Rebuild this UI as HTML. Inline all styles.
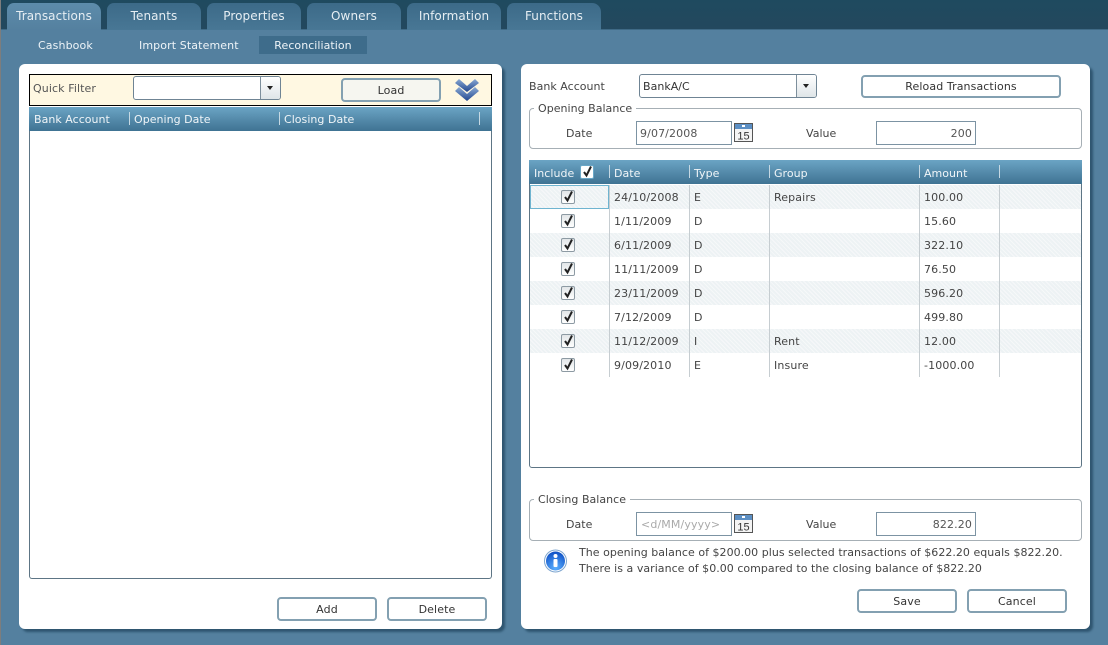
<!DOCTYPE html>
<html><head><meta charset="utf-8"><style>
html,body{margin:0;padding:0}
body{width:1108px;height:645px;overflow:hidden;position:relative;background:#54809f;font:11px "DejaVu Sans",sans-serif;color:#444;letter-spacing:.03px}
div,span{position:absolute;box-sizing:border-box;white-space:nowrap}
.top{left:0;top:0;width:1108px;height:30px;background:linear-gradient(#1f4a5f,#23485e);border-bottom:1px solid #3f6a86}
.tab{top:3px;width:94px;height:27px;border-radius:7px 9px 0 0;background:linear-gradient(#3c6a88,#487795);color:#e6eef3;text-align:center;line-height:26px;font-size:12px;letter-spacing:.08px}
.tab.a{background:linear-gradient(#5d8cab,#54809f);height:28px}
.sub{top:36px;height:18px;line-height:19px;text-align:center;color:#eef4f8;letter-spacing:.11px}
.panel{top:64px;height:565px;background:#fff;border-radius:6px;box-shadow:3px 3px 2px #2f5570}
.t{line-height:14px;margin-top:1px}
.btn{border:2px solid #83a0b1;border-radius:4px;background:#fff;text-align:center;color:#333;height:24px;line-height:21px;width:100px;letter-spacing:.12px}
.combo{background:#fff;border:1px solid #6f8494;border-radius:3px;color:#333;line-height:23px;padding-left:3px}
.arr{right:0;top:0;bottom:0;width:20px;border-left:1px solid #7d8f9c;background:linear-gradient(#fff,#dfe5e8);border-radius:0 2px 2px 0}
.arr:after{content:"";position:absolute;left:6px;top:9px;border:3.5px solid transparent;border-top:4px solid #222;border-bottom:0}
.hdr{background:linear-gradient(#6ba4c4,#3f7393);color:#f0f5f8;line-height:25px;height:24px}
.sep{width:1px;background:#c5d8e3;top:5px;height:13px}
.group{left:529px;width:553px;border:1px solid #a6afb5;border-radius:4px}
.leg{left:534px;background:#fff;padding:0 4px;color:#444;line-height:14px;margin-top:1px}
.inp{width:100px;height:24px;background:#fff;border:1px solid #7c93a3;line-height:23px;padding:0 3px;color:#555;letter-spacing:.12px}
.row{left:530px;width:551px;height:24px;line-height:24px}
.alt{background-color:#edf2f4;background-image:repeating-linear-gradient(45deg,#f6f8f9 0 1px,transparent 1px 3px)}
.vl{width:1px;background:#c6cdd1;top:185px;height:192px}
.cb{width:14px;height:14px;border:1px solid #8d9aa3;border-radius:2px;background:linear-gradient(#e2e6e8,#fff)}
.cb svg{position:absolute;left:0;top:-1px}
.cell{top:0;line-height:25px;letter-spacing:.13px}
</style></head><body>
<div style="left:0;top:0;width:1px;height:645px;background:#7d7d7d;z-index:5"></div>
<div class="top"></div>
<div class="tab a" style="left:7px">Transactions</div>
<div class="tab" style="left:107px">Tenants</div>
<div class="tab" style="left:207px">Properties</div>
<div class="tab" style="left:307px">Owners</div>
<div class="tab" style="left:407px">Information</div>
<div class="tab" style="left:507px">Functions</div>
<div class="sub" style="left:38px">Cashbook</div>
<div class="sub" style="left:139px">Import Statement</div>
<div class="sub" style="left:259px;width:108px;background:#3e6c8b;letter-spacing:.05px">Reconciliation</div>

<div class="panel" style="left:19px;width:483px"></div>
<div style="left:29px;top:74px;width:463px;height:32px;background:#fff8e2;border:1px solid #000"></div>
<div class="t" style="left:33px;top:81px;color:#555;letter-spacing:.1px">Quick Filter</div>
<div class="combo" style="left:133px;top:76px;width:148px;height:24px"><div class="arr"></div></div>
<div class="btn" style="left:341px;top:78px;background:#f6f6f0">Load</div>
<svg style="position:absolute;left:454px;top:78px" width="26" height="24" viewBox="0 0 26 24"><defs><linearGradient id="c" x1="0" y1="0" x2="0" y2="1"><stop offset="0" stop-color="#8aa9d4"/><stop offset="1" stop-color="#22478f"/></linearGradient></defs><path d="M1 5 L5 1 L13 8 L21 1 L25 5 L13 14 Z" fill="url(#c)"/><path d="M1 13 L5 9 L13 16 L21 9 L25 13 L13 23 Z" fill="url(#c)"/></svg>

<div style="left:29px;top:107px;width:463px;height:472px;border:1px solid #5d7585;border-top:0;border-radius:0 0 3px 3px;background:#fff"></div>
<div class="hdr" style="left:29px;top:107px;width:463px">
<span style="left:5px">Bank Account</span><div class="sep" style="left:100px"></div>
<span style="left:105px">Opening Date</span><div class="sep" style="left:250px"></div>
<span style="left:255px">Closing Date</span><div class="sep" style="left:450px"></div></div>
<div class="btn" style="left:277px;top:597px">Add</div>
<div class="btn" style="left:387px;top:597px">Delete</div>

<div class="panel" style="left:521px;width:569px"></div>
<div class="t" style="left:529px;top:79px">Bank Account</div>
<div class="combo" style="left:639px;top:74px;width:178px;height:24px">BankA/C<div class="arr"></div></div>
<div class="btn" style="left:861px;top:75px;width:200px;height:23px;line-height:20px;letter-spacing:.1px">Reload Transactions</div>

<div class="group" style="top:108px;height:41px"></div>
<div class="leg" style="top:101px">Opening Balance</div>
<div class="t" style="left:566px;top:126px">Date</div>
<div class="inp" style="left:636px;top:121px;width:96px">9/07/2008</div>
<svg style="position:absolute;left:734px;top:123px" width="20" height="20"><rect x=".5" y=".5" width="18" height="18" fill="#f4f4f4" stroke="#555"/><rect x="1" y="1" width="17" height="5" fill="#5c8fc4"/><rect x="8" y="2" width="3" height="2" fill="#fff"/><text x="9.5" y="16.5" font-size="11" text-anchor="middle" fill="#333" font-family="Liberation Sans">15</text></svg>
<div class="t" style="left:806px;top:126px">Value</div>
<div class="inp" style="left:876px;top:121px;text-align:right">200</div>

<div style="left:529px;top:160px;width:553px;height:308px;border:1px solid #5d7585;border-radius:3px;background:#fff"></div>
<div class="hdr" style="left:529px;top:160px;width:553px;line-height:27px">
<span style="left:5px">Include</span>
<div class="cb" style="left:51px;top:5px;background:#fff;border-color:#6aa8c8"><svg width="13" height="13" viewBox="0 0 13 13"><path d="M3 7 L5.5 10.5 L10 1.5" fill="none" stroke="#222" stroke-width="2"/></svg></div>
<div class="sep" style="left:80px"></div><span style="left:85px">Date</span>
<div class="sep" style="left:160px"></div><span style="left:165px">Type</span>
<div class="sep" style="left:240px"></div><span style="left:245px">Group</span>
<div class="sep" style="left:390px"></div><span style="left:395px">Amount</span>
<div class="sep" style="left:470px"></div></div>

<div class="row alt" style="top:185px"><div class="cb" style="left:31px;top:5px"><svg width="13" height="13" viewBox="0 0 13 13"><path d="M3 7 L5.5 10.5 L10 1.5" fill="none" stroke="#222" stroke-width="2"/></svg></div><span class="cell" style="left:84px">24/10/2008</span><span class="cell" style="left:164px">E</span><span class="cell" style="left:244px">Repairs</span><span class="cell" style="left:394px">100.00</span></div>
<div class="row" style="top:209px"><div class="cb" style="left:31px;top:5px"><svg width="13" height="13" viewBox="0 0 13 13"><path d="M3 7 L5.5 10.5 L10 1.5" fill="none" stroke="#222" stroke-width="2"/></svg></div><span class="cell" style="left:84px">1/11/2009</span><span class="cell" style="left:164px">D</span><span class="cell" style="left:394px">15.60</span></div>
<div class="row alt" style="top:233px"><div class="cb" style="left:31px;top:5px"><svg width="13" height="13" viewBox="0 0 13 13"><path d="M3 7 L5.5 10.5 L10 1.5" fill="none" stroke="#222" stroke-width="2"/></svg></div><span class="cell" style="left:84px">6/11/2009</span><span class="cell" style="left:164px">D</span><span class="cell" style="left:394px">322.10</span></div>
<div class="row" style="top:257px"><div class="cb" style="left:31px;top:5px"><svg width="13" height="13" viewBox="0 0 13 13"><path d="M3 7 L5.5 10.5 L10 1.5" fill="none" stroke="#222" stroke-width="2"/></svg></div><span class="cell" style="left:84px">11/11/2009</span><span class="cell" style="left:164px">D</span><span class="cell" style="left:394px">76.50</span></div>
<div class="row alt" style="top:281px"><div class="cb" style="left:31px;top:5px"><svg width="13" height="13" viewBox="0 0 13 13"><path d="M3 7 L5.5 10.5 L10 1.5" fill="none" stroke="#222" stroke-width="2"/></svg></div><span class="cell" style="left:84px">23/11/2009</span><span class="cell" style="left:164px">D</span><span class="cell" style="left:394px">596.20</span></div>
<div class="row" style="top:305px"><div class="cb" style="left:31px;top:5px"><svg width="13" height="13" viewBox="0 0 13 13"><path d="M3 7 L5.5 10.5 L10 1.5" fill="none" stroke="#222" stroke-width="2"/></svg></div><span class="cell" style="left:84px">7/12/2009</span><span class="cell" style="left:164px">D</span><span class="cell" style="left:394px">499.80</span></div>
<div class="row alt" style="top:329px"><div class="cb" style="left:31px;top:5px"><svg width="13" height="13" viewBox="0 0 13 13"><path d="M3 7 L5.5 10.5 L10 1.5" fill="none" stroke="#222" stroke-width="2"/></svg></div><span class="cell" style="left:84px">11/12/2009</span><span class="cell" style="left:164px">I</span><span class="cell" style="left:244px">Rent</span><span class="cell" style="left:394px">12.00</span></div>
<div class="row" style="top:353px"><div class="cb" style="left:31px;top:5px"><svg width="13" height="13" viewBox="0 0 13 13"><path d="M3 7 L5.5 10.5 L10 1.5" fill="none" stroke="#222" stroke-width="2"/></svg></div><span class="cell" style="left:84px">9/09/2010</span><span class="cell" style="left:164px">E</span><span class="cell" style="left:244px">Insure</span><span class="cell" style="left:394px">-1000.00</span></div>
<div style="left:530px;top:185px;width:79px;height:24px;border:1px solid #6fb4d0"></div>
<div class="vl" style="left:609px"></div><div class="vl" style="left:689px"></div><div class="vl" style="left:769px"></div><div class="vl" style="left:919px"></div><div class="vl" style="left:999px"></div>

<div class="group" style="top:499px;height:42px"></div>
<div class="leg" style="top:492px">Closing Balance</div>
<div class="t" style="left:566px;top:517px">Date</div>
<div class="inp" style="left:636px;top:512px;width:96px;color:#aaa;padding-left:4px">&lt;d/MM/yyyy&gt;</div>
<svg style="position:absolute;left:734px;top:514px" width="20" height="20"><rect x=".5" y=".5" width="18" height="18" fill="#f4f4f4" stroke="#555"/><rect x="1" y="1" width="17" height="5" fill="#5c8fc4"/><rect x="8" y="2" width="3" height="2" fill="#fff"/><text x="9.5" y="16.5" font-size="11" text-anchor="middle" fill="#333" font-family="Liberation Sans">15</text></svg>
<div class="t" style="left:806px;top:517px">Value</div>
<div class="inp" style="left:876px;top:512px;text-align:right">822.20</div>

<svg style="position:absolute;left:543px;top:548px" width="26" height="26" viewBox="0 0 26 26"><defs><radialGradient id="i" cx=".5" cy=".85" r=".85"><stop offset="0" stop-color="#5cb0ff"/><stop offset="1" stop-color="#0d4fc5"/></radialGradient></defs><circle cx="12.5" cy="13" r="11" fill="#fff" stroke="#7fa6cf"/><circle cx="12.5" cy="13" r="9.5" fill="url(#i)"/><circle cx="12.5" cy="8" r="2" fill="#fff"/><rect x="10.5" y="11" width="4" height="8" rx="1" fill="#fff"/></svg>
<div class="t" style="left:579px;top:545px">The opening balance of $200.00 plus selected transactions of $622.20 equals $822.20.</div>
<div class="t" style="left:579px;top:561px">There is a variance of $0.00 compared to the closing balance of $822.20</div>
<div class="btn" style="left:857px;top:589px">Save</div>
<div class="btn" style="left:967px;top:589px">Cancel</div>
</body></html>
